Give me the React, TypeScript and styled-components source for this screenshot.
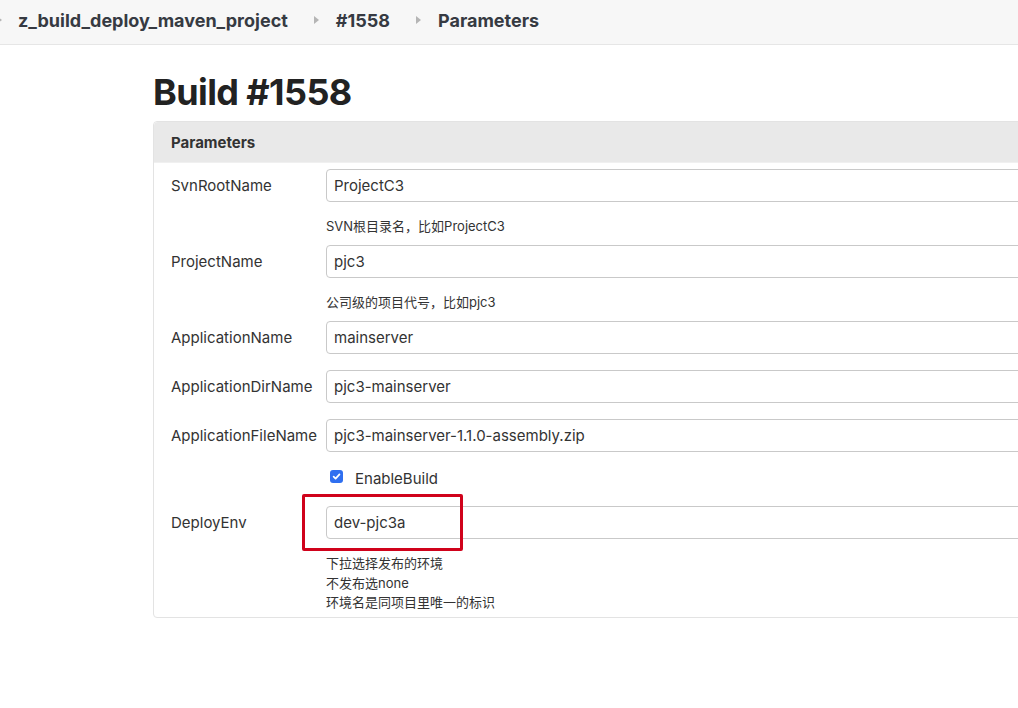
import React from "react";
import styled, { createGlobalStyle } from "styled-components";

const Global = createGlobalStyle`
  html, body { margin: 0; padding: 0; background: #fff; overflow: hidden; }
  body { font-family: Inter, "Liberation Sans", "Noto Sans CJK SC", sans-serif; color: #333; }
`;

const Page = styled.div`
  width: 1018px;
  height: 708px;
  overflow: hidden;
`;

const Crumbs = styled.nav`
  box-sizing: border-box;
  height: 45px;
  padding-bottom: 4px;
  background: #f7f7f7;
  border-bottom: 1px solid #e6e6e6;
  display: flex;
  align-items: center;
  white-space: nowrap;
`;

const Crumb = styled.span`
  font-size: 18px;
  font-weight: 700;
  color: #363a42;
`;

const Sep = styled.span<{ $edge?: boolean }>`
  width: 0;
  height: 0;
  border-top: 4px solid transparent;
  border-bottom: 4px solid transparent;
  border-left: 5px solid #b5b5b5;
  margin: ${(p) => (p.$edge ? "0 16px 0 -3px" : "0 17px 0 26px")};
`;

const Main = styled.main`
  padding-left: 153px;
`;

const Title = styled.h1`
  margin: 0;
  padding-top: 23px;
  height: 53px;
  font-size: 36px;
  line-height: 48px;
  font-weight: 700;
  color: #222;
  letter-spacing: -0.6px;
`;

const Panel = styled.section`
  width: 1100px;
  border: 1px solid #e3e3e3;
  border-radius: 4px;
`;

const PanelHead = styled.div`
  height: 40px;
  background: #e9e9e9;
  border-bottom: 1px solid #f0f0f0;
  display: flex;
  align-items: center;
  padding-left: 17px;
  font-size: 15px;
  font-weight: 700;
  color: #333;
  border-radius: 4px 4px 0 0;
`;

const PanelBody = styled.div`
  padding: 6px 17px 4px 17px;
`;

const Field = styled.div<{ $gap: number }>`
  position: relative;
  display: grid;
  grid-template-columns: 155px 1fr;
  align-items: center;
  margin-top: ${(p) => p.$gap}px;
  height: 33px;
`;

const Label = styled.label`
  font-size: 15px;
  color: #333;
`;

const Input = styled.div`
  height: 31px;
  border: 1px solid #c9c9c9;
  border-radius: 4px;
  display: flex;
  align-items: center;
  padding-left: 7px;
  font-size: 15px;
  color: #333;
  background: #fff;
`;

const Help = styled.div<{ $lh: number }>`
  margin-left: 155px;
  padding-top: 15px;
  font-size: 13px;
  line-height: ${(p) => p.$lh}px;
  color: #333;
`;

const CheckRow = styled.div`
  margin-top: 15px;
  margin-left: 159px;
  height: 22px;
  display: flex;
  align-items: center;
  gap: 12px;
  font-size: 15px;
  color: #333;
`;

const Box = styled.span`
  width: 13px;
  height: 13px;
  border-radius: 3px;
  background: #2f6ff0;
  display: inline-flex;
  align-items: center;
  justify-content: center;
  margin-top: -3px;
`;

const Highlight = styled.div`
  position: absolute;
  left: 131px;
  top: -12px;
  width: 155px;
  height: 51px;
  border: 3px solid #d0021b;
  border-radius: 2px;
  pointer-events: none;
`;

type Row = { label: string; value: string; help?: string };

const rows: Row[] = [
  { label: "SvnRootName", value: "ProjectC3", help: "SVN根目录名，比如ProjectC3" },
  { label: "ProjectName", value: "pjc3", help: "公司级的项目代号，比如pjc3" },
  { label: "ApplicationName", value: "mainserver" },
  { label: "ApplicationDirName", value: "pjc3-mainserver" },
  { label: "ApplicationFileName", value: "pjc3-mainserver-1.1.0-assembly.zip" },
];

export default function App() {
  return (
    <Page>
      <Global />
      <Crumbs>
        <Sep $edge />
        <Crumb>z_build_deploy_maven_project</Crumb>
        <Sep />
        <Crumb>#1558</Crumb>
        <Sep />
        <Crumb>Parameters</Crumb>
      </Crumbs>
      <Main>
        <Title>Build #1558</Title>
        <Panel>
          <PanelHead>Parameters</PanelHead>
          <PanelBody>
            {rows.map((r, i) => (
              <React.Fragment key={r.label}>
                <Field $gap={i === 0 ? 0 : rows[i - 1].help ? 9 : 16}>
                  <Label>{r.label}</Label>
                  <Input>{r.value}</Input>
                </Field>
                {r.help && <Help $lh={19}>{r.help}</Help>}
              </React.Fragment>
            ))}
            <CheckRow>
              <Box>
                <svg width="9" height="9" viewBox="0 0 10 10">
                  <path d="M1.8 5.2 L4 7.4 L8.3 2.6" fill="none" stroke="#fff" strokeWidth="1.9" strokeLinecap="round" strokeLinejoin="round" />
                </svg>
              </Box>
              <span>EnableBuild</span>
            </CheckRow>
            <Field $gap={17}>
              <Label>DeployEnv</Label>
              <Input>dev-pjc3a</Input>
              <Highlight />
            </Field>
            <Help $lh={19.5}>
              下拉选择发布的环境
              <br />
              不发布选none
              <br />
              环境名是同项目里唯一的标识
            </Help>
          </PanelBody>
        </Panel>
      </Main>
    </Page>
  );
}
